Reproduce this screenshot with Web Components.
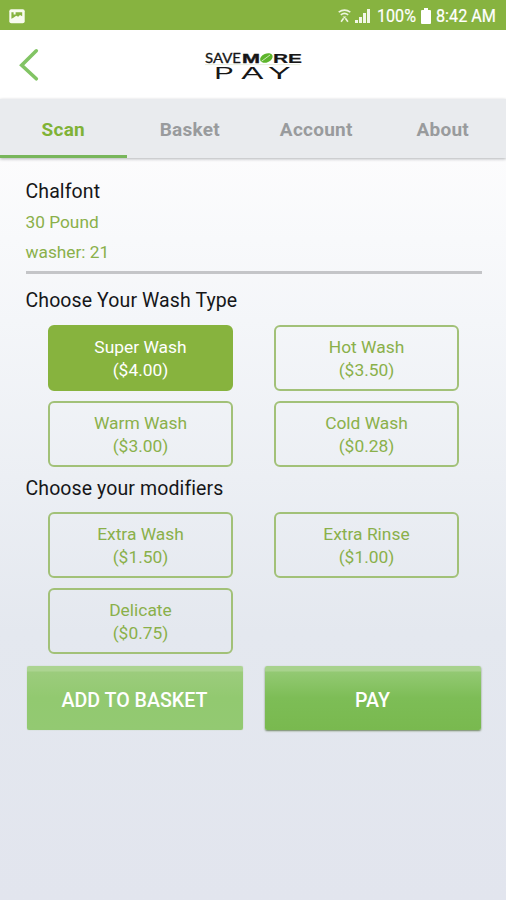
<!DOCTYPE html>
<html lang="en"><head><meta charset="utf-8"><title>SaveMore Pay</title>
<style>
html,body{margin:0;height:100%}
body{font-family:Roboto,"Liberation Sans",sans-serif;overflow:hidden}
</style></head><body>
<wash-app></wash-app>
<script>
const define=(name,html)=>customElements.define(name,class extends HTMLElement{
  constructor(){super();const t=document.createElement('template');t.innerHTML=html;this.attachShadow({mode:'open'}).append(t.content.cloneNode(true));}
});

define('status-bar',`<style>
:host{display:flex;align-items:center;height:30px;box-sizing:border-box;background:#87b340;color:#fff;padding:2px 9px 0;font-size:17.5px}
svg{display:block;flex:none;overflow:visible}.gap{flex:1}
.pct{width:40px;margin-right:4px}.time{width:61px;margin-left:5px}
.t text{fill:#fff;stroke:#fff;stroke-width:.2px}
</style>
<svg width="16" height="15" viewBox="0 0 16 15"><rect x=".3" y=".3" width="15.4" height="14" rx="2" fill="#f8fbef"/><path d="M2.4 9.8V3.2h2.2v2.2h2V3.2h6.6v4L11 6 9.2 7.8 7.2 6.8 4.4 8.8z" fill="#87b340"/></svg>
<span class="gap"></span>
<svg width="13" height="15" viewBox="0 0 13 15" style="margin-right:4px" fill="none" stroke="#eef5df"><path d="M.7 3.2Q6.5-1 12.3 3.2" stroke-width="1.6"/><path d="M2.8 5.8Q6.5 3 10.2 5.8" stroke-width="1.6"/><path d="M4.5 7.4h4L6.5 9.4z" fill="#eef5df" stroke="none"/><path d="M5.6 9.2L3.1 12.8M7.4 9.2l2.5 3.6" stroke-width="1.6"/></svg>
<svg width="15" height="16" viewBox="0 0 15 16" style="margin-right:7px" fill="#f2f7e8"><path d="M0 12h3v3H0zM4 9h3v6H4zM8 5h3v10H8zM12 1h3v14h-3z"/></svg>
<svg class="t pct" height="24"><text x="0" y="18" textLength="39" lengthAdjust="spacingAndGlyphs">100%</text></svg>
<svg width="10" height="16" viewBox="0 0 10 16" fill="#fff"><path d="M3 0h4v2h2q1 0 1 1v12q0 1-1 1H1q-1 0-1-1V3q0-1 1-1h2z"/></svg>
<svg class="t time" height="24"><text x="0" y="18" textLength="60" lengthAdjust="spacingAndGlyphs">8:42 AM</text></svg>`);

define('brand-logo',`<style>:host{display:block;width:100px;height:32px}svg{display:block;overflow:visible}</style>
<svg width="100" height="32" viewBox="0 0 100 32" font-family="Liberation Sans,sans-serif" fill="#161616">
<text x="2" y="13.6" font-size="13.5" font-family="Lato,sans-serif" textLength="36" lengthAdjust="spacingAndGlyphs" stroke="#161616" stroke-width=".3">SAVE</text>
<text x="39" y="13.6" font-size="13" font-weight="700" textLength="18" lengthAdjust="spacingAndGlyphs" stroke="#161616" stroke-width=".4">M</text>
<ellipse cx="63.4" cy="9" rx="6.6" ry="4.3" transform="rotate(-24 63.4 9)" fill="#5db52b"/><path d="M58.5 12.3L67 6" fill="none" stroke="#e6f5d9" stroke-width=".8"/>
<text x="70" y="13.6" font-size="13" font-weight="700" textLength="29" lengthAdjust="spacingAndGlyphs" stroke="#161616" stroke-width=".2">RE</text>
<path d="M2 15.6h95" stroke="#d8e3c8" stroke-width=".6"/>
<g font-size="17"><text transform="translate(11.3 30.2) scale(1.72 1)">P</text><text transform="translate(38.2 30.2) scale(1.95 1)">A</text><text transform="translate(65 30.2) scale(2 1)">Y</text></g>
</svg>`);

define('app-header',`<style>
:host{display:grid;grid-template-columns:100px 1fr 100px;height:69px;background:#fff;align-items:center}
.back{margin-left:18px}brand-logo{justify-self:center}
</style><svg class="back" width="22" height="34" viewBox="0 0 22 34"><path d="M18.3 2.8L3.7 17.2 18.3 30.8" fill="none" stroke="#82c464" stroke-width="3.6" stroke-linecap="round"/></svg><brand-logo></brand-logo>`);

define('nav-tab',`<style>
:host{display:flex;align-items:center;justify-content:center;box-sizing:border-box;height:59px;padding-top:4px;color:#999b9d;font-weight:700;font-size:19px;letter-spacing:.25px;border-bottom:3px solid transparent}
:host([active]){color:#80b236;border-color:#78b65b}
</style><slot></slot>`);

define('tab-bar',`<style>
:host{display:grid;grid-template-columns:repeat(4,1fr);height:59px;background:#e9ebee;position:relative;box-shadow:0 1px 3px #b0b2b5}
</style><slot></slot>`);

define('section-title',`<style>:host{display:block;font-size:19.5px;line-height:24px;letter-spacing:.1px;color:#161719}</style><slot></slot>`);

define('wash-option',`<style>
:host{display:flex;flex-direction:column;align-items:center;justify-content:center;box-sizing:border-box;height:66px;border:2px solid #a2c178;border-radius:6px;color:#8ab04a;font-size:17.4px;line-height:23px;padding-top:1px}
:host([selected]){background:#87b33e;border-color:#87b33e;color:#fff}
</style><slot></slot><slot name="price"></slot>`);

define('option-grid',`<style>:host{display:grid;grid-template-columns:185px 185px;column-gap:41px;row-gap:10px;padding-left:22px}</style><slot></slot>`);

define('action-button',`<style>
:host{display:flex;align-items:center;justify-content:center;box-sizing:border-box;height:64px;padding-top:4px;border-radius:2px;color:#fff;font-size:19.6px;font-weight:500;background:linear-gradient(#acd491 0 5px,#9ccc7d 6px,#92c970 50%,#93c972);box-shadow:0 0 1px #a3bd91}
:host([primary]){background:linear-gradient(#a8d28d 0 5px,#93c973 6px,#7dbd56 50%,#79b94f);box-shadow:0 1px 2px #6e8560}
</style><slot></slot>`);

define('machine-info',`<style>
:host{display:block;height:91px;border-bottom:3px solid #c4c5c8;width:456px;color:#8ab04a;font-size:17.3px;line-height:30px}
section-title{margin-bottom:3px}div{height:29.5px}
</style><section-title><slot name="place"></slot></section-title><div><slot name="size"></slot></div><div><slot name="machine"></slot></div>`);

define('wash-app',`<style>
:host{display:flex;flex-direction:column;width:506px;height:900px;background:#e2e5ee}
main{flex:1;padding:22px 0 0 25.5px;background:linear-gradient(#fcfcfd,#f4f6f9 22%,#e4e8ef 64%,#e2e5ee)}
.type{margin:15px 0 12px}.mod{margin:10px 0 11px}
.actions{display:grid;grid-template-columns:216px 216px;gap:22px;margin:12px 0 0 1px}
option-grid{margin-left:.5px}
</style>
<status-bar></status-bar><app-header></app-header>
<tab-bar><nav-tab active>Scan</nav-tab><nav-tab>Basket</nav-tab><nav-tab>Account</nav-tab><nav-tab>About</nav-tab></tab-bar>
<main>
<machine-info><span slot="place">Chalfont</span><span slot="size">30 Pound</span><span slot="machine">washer: 21</span></machine-info>
<section-title class="type">Choose Your Wash Type</section-title>
<option-grid>
<wash-option selected>Super Wash<span slot="price">($4.00)</span></wash-option>
<wash-option>Hot Wash<span slot="price">($3.50)</span></wash-option>
<wash-option>Warm Wash<span slot="price">($3.00)</span></wash-option>
<wash-option>Cold Wash<span slot="price">($0.28)</span></wash-option>
</option-grid>
<section-title class="mod">Choose your modifiers</section-title>
<option-grid>
<wash-option>Extra Wash<span slot="price">($1.50)</span></wash-option>
<wash-option>Extra Rinse<span slot="price">($1.00)</span></wash-option>
<wash-option>Delicate<span slot="price">($0.75)</span></wash-option>
</option-grid>
<div class="actions"><action-button>ADD TO BASKET</action-button><action-button primary>PAY</action-button></div>
</main>`);
</script></body></html>
